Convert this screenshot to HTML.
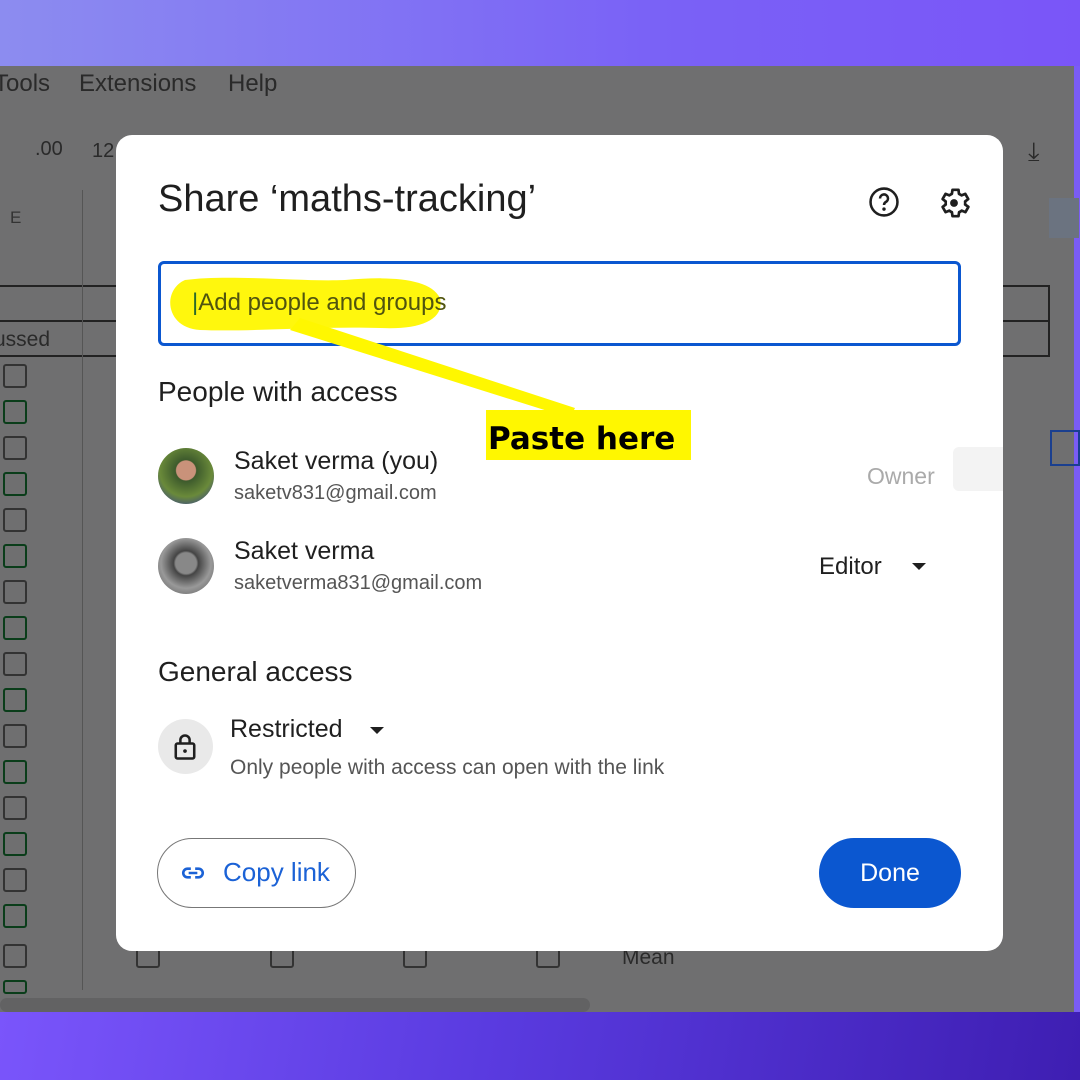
<!DOCTYPE html>
<html><head><meta charset="utf-8"><style>
*{margin:0;padding:0;box-sizing:border-box}
body{width:1080px;height:1080px;position:relative;overflow:hidden;font-family:"Liberation Sans",sans-serif;background:#6f6f70}
.top{position:absolute;left:0;top:0;width:1080px;height:66px;background:linear-gradient(90deg,#8c8cf0,#7a62f6 60%,#7a55f8)}
.bot{position:absolute;left:0;top:1012px;width:1080px;height:68px;background:linear-gradient(100deg,#7a55fb,#5a3be0 45%,#3e1eb2)}
.rs{position:absolute;left:1074px;top:66px;width:6px;height:946px;background:#7a5cf5}
.t{position:absolute;color:#2a2a2a}
.dlg{position:absolute;left:116px;top:135px;width:887px;height:816px;background:#fff;border-radius:16px}
.d{position:absolute;color:#1f1f1f;white-space:nowrap}
.cb{position:absolute;width:24px;height:24px;border:2px solid #333;border-radius:3px}
.g{border-color:#0a3d1a}
</style></head><body>
<div class="top"></div>
<div class="rs"></div>
<div class="t" style="left:-6px;top:70px;font-size:24px">Tools</div>
<div class="t" style="left:79px;top:70px;font-size:24px">Extensions</div>
<div class="t" style="left:228px;top:70px;font-size:24px">Help</div>
<div class="t" style="left:35px;top:138px;font-size:20px">.00</div>
<div class="t" style="left:92px;top:140px;font-size:20px">12</div>
<div class="t" style="left:1028px;top:136px;font-size:26px">⤓</div>
<div class="t" style="left:10px;top:208px;font-size:17px;color:#333">E</div>
<div style="position:absolute;left:1049px;top:198px;width:30px;height:40px;background:#6b7380"></div>
<div style="position:absolute;left:0;top:285px;width:1050px;height:72px;border:2px solid #222;border-left:none"></div>
<div style="position:absolute;left:0;top:320px;width:1050px;height:2px;background:#222"></div>
<div style="position:absolute;left:82px;top:190px;width:1px;height:800px;background:#555"></div>
<div style="position:absolute;left:1050px;top:430px;width:30px;height:36px;border:2px solid #1a3f8f"></div>
<div class="t" style="left:-6px;top:328px;font-size:21px">ussed</div>
<div class="cb" style="left:3px;top:364px"></div><div class="cb g" style="left:3px;top:400px"></div>
<div class="cb" style="left:3px;top:436px"></div><div class="cb g" style="left:3px;top:472px"></div>
<div class="cb" style="left:3px;top:508px"></div><div class="cb g" style="left:3px;top:544px"></div>
<div class="cb" style="left:3px;top:580px"></div><div class="cb g" style="left:3px;top:616px"></div>
<div class="cb" style="left:3px;top:652px"></div><div class="cb g" style="left:3px;top:688px"></div>
<div class="cb" style="left:3px;top:724px"></div><div class="cb g" style="left:3px;top:760px"></div>
<div class="cb" style="left:3px;top:796px"></div><div class="cb g" style="left:3px;top:832px"></div>
<div class="cb" style="left:3px;top:868px"></div><div class="cb g" style="left:3px;top:904px"></div>
<div class="cb" style="left:3px;top:944px"></div><div class="cb g" style="left:3px;top:980px;height:14px"></div>
<div class="cb" style="left:136px;top:944px"></div><div class="cb" style="left:270px;top:944px"></div>
<div class="cb" style="left:403px;top:944px"></div><div class="cb" style="left:536px;top:944px"></div>
<div class="t" style="left:622px;top:946px;font-size:21px">Mean</div>
<div style="position:absolute;left:0;top:998px;width:590px;height:14px;background:#626263;border-radius:7px"></div>
<div class="bot"></div>

<div class="dlg">
<div class="d" style="left:42px;top:43px;font-size:38px">Share ‘maths-tracking’</div>
<svg style="position:absolute;left:751px;top:50px" width="34" height="34" viewBox="0 0 24 24"><circle cx="12" cy="12" r="9.5" fill="none" stroke="#1f1f1f" stroke-width="1.8"/><path d="M9.2 9.5a2.8 2.8 0 1 1 4.2 2.4c-.9.6-1.4 1-1.4 2.2" fill="none" stroke="#1f1f1f" stroke-width="1.8"/><circle cx="12" cy="17" r="1.2" fill="#1f1f1f"/></svg>
<svg style="position:absolute;left:820px;top:50px" width="36" height="36" viewBox="0 0 24 24"><path d="M19.4 13a7.5 7.5 0 0 0 0-2l2.1-1.6-2-3.5-2.5 1a7.6 7.6 0 0 0-1.7-1L15 3.2h-4l-.4 2.7a7.6 7.6 0 0 0-1.7 1l-2.5-1-2 3.5L6.5 11a7.5 7.5 0 0 0 0 2l-2.1 1.6 2 3.5 2.5-1c.5.4 1.1.8 1.7 1l.4 2.7h4l.4-2.7c.6-.2 1.2-.6 1.7-1l2.5 1 2-3.5z" fill="none" stroke="#1f1f1f" stroke-width="1.8" stroke-linejoin="round"/><circle cx="12" cy="12" r="2.6" fill="#1f1f1f"/></svg>
<div style="position:absolute;left:42px;top:126px;width:803px;height:85px;border:3px solid #0b57d0;border-radius:6px"></div>
<div class="d" style="left:42px;top:241px;font-size:28px">People with access</div>
<div style="position:absolute;left:42px;top:313px;width:56px;height:56px;border-radius:50%;background:radial-gradient(circle at 50% 40%,#c9927a 0 22%,#3d5a2c 24%,#6a8a3a 60%,#4a5d6e 80%)"></div>
<div class="d" style="left:118px;top:312px;font-size:25px">Saket verma (you)</div>
<div class="d" style="left:118px;top:347px;font-size:20px;color:#555">saketv831@gmail.com</div>
<div class="d" style="left:751px;top:328px;font-size:23px;color:#aaa">Owner</div>
<div style="position:absolute;left:837px;top:312px;width:50px;height:44px;background:#f3f3f3;border-radius:6px 0 0 6px"></div>
<div style="position:absolute;left:42px;top:403px;width:56px;height:56px;border-radius:50%;background:radial-gradient(circle at 50% 45%,#888 0 25%,#444 30%,#999 60%,#555)"></div>
<div class="d" style="left:118px;top:402px;font-size:25px">Saket verma</div>
<div class="d" style="left:118px;top:437px;font-size:20px;color:#555">saketverma831@gmail.com</div>
<div class="d" style="left:703px;top:418px;font-size:24px">Editor</div>
<div style="position:absolute;left:796px;top:428px;border:7px solid transparent;border-top:7px solid #1f1f1f;border-bottom:0"></div>
<div class="d" style="left:42px;top:521px;font-size:28px">General access</div>
<div style="position:absolute;left:42px;top:584px;width:55px;height:55px;border-radius:50%;background:#e9e9e9"></div>
<svg style="position:absolute;left:55px;top:597px" width="28" height="30" viewBox="0 0 24 26"><rect x="4" y="10" width="16" height="13" rx="1.5" fill="none" stroke="#1f1f1f" stroke-width="2.2"/><path d="M8 10V7a4 4 0 0 1 8 0v3" fill="none" stroke="#1f1f1f" stroke-width="2.2"/><circle cx="12" cy="16.5" r="1.6" fill="#1f1f1f"/></svg>
<div class="d" style="left:114px;top:580px;font-size:25px">Restricted</div>
<div style="position:absolute;left:254px;top:592px;border:7px solid transparent;border-top:7px solid #1f1f1f;border-bottom:0"></div>
<div class="d" style="left:114px;top:621px;font-size:21px;color:#555">Only people with access can open with the link</div>
<div style="position:absolute;left:41px;top:703px;width:199px;height:70px;border:1.5px solid #777;border-radius:35px"></div>
<svg style="position:absolute;left:63px;top:725px" width="28" height="26" viewBox="0 0 24 24"><path d="M10 8H7a4 4 0 0 0 0 8h3M14 8h3a4 4 0 0 1 0 8h-3M8 12h8" fill="none" stroke="#1b62d6" stroke-width="2.4"/></svg>
<div class="d" style="left:107px;top:722px;font-size:26px;color:#1b62d6">Copy link</div>
<div style="position:absolute;left:703px;top:703px;width:142px;height:70px;border-radius:35px;background:#0b57d0;color:#fff;font-size:25px;text-align:center;line-height:70px">Done</div>
</div>

<svg style="position:absolute;left:0;top:0" width="1080" height="1080">
<path d="M300 318 L575 408 L570 418 L290 330 Z" fill="#fff700"/>
<path d="M185 280 C230 274 300 282 345 280 C390 276 430 278 440 298 C445 320 420 330 380 328 C320 326 250 332 200 330 C165 328 162 290 185 280 Z" fill="#fff700" opacity="0.95"/>
<rect x="486" y="410" width="205" height="50" fill="#fff700"/>
</svg>
<div style="position:absolute;left:192px;top:289px;font-size:24px;color:#50540f;white-space:nowrap"><span style="color:#2a6a2a">|</span>Add people and groups</div>
<div style="position:absolute;left:488px;top:421px;font-size:31px;font-weight:bold;color:#000;white-space:nowrap;font-family:'DejaVu Sans','Liberation Sans',sans-serif">Paste here</div>
</body></html>
